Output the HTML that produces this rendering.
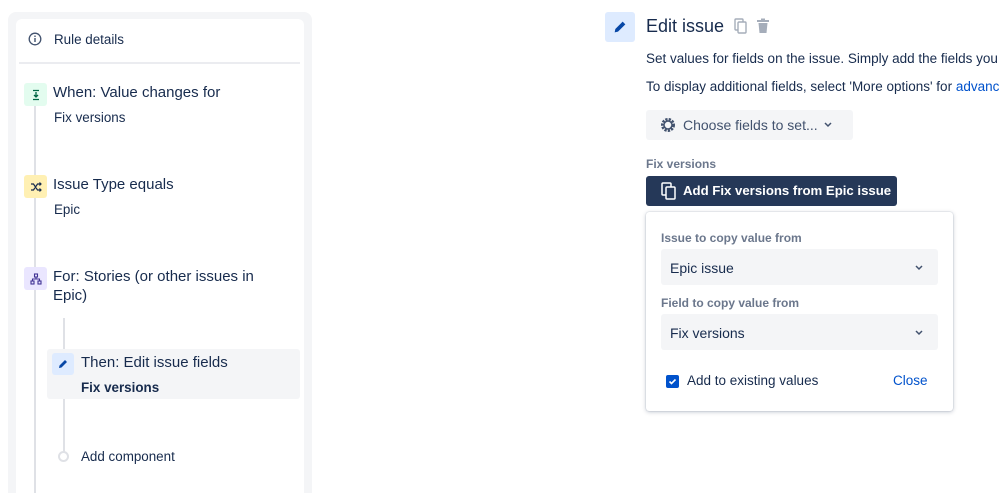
<!DOCTYPE html>
<html><head><style>
*{box-sizing:border-box;margin:0;padding:0}
html,body{width:999px;height:493px;overflow:hidden}
body{background:#fff;font-family:"Liberation Sans",sans-serif;color:#172b4d;position:relative}
.a{position:absolute;white-space:nowrap}
.ic{position:absolute;width:23px;height:23px;border-radius:3px;display:flex;align-items:center;justify-content:center}
.sel{position:absolute;left:661px;width:277px;height:36px;background:#f4f5f7;border-radius:3px;font-size:14px;padding:11px 9px}
.lab{font-size:12px;color:#6b778c;font-weight:bold}
</style></head><body>
<div class="a" style="left:8px;top:12px;width:304px;height:481px;background:#f4f5f7;border-radius:8px 8px 0 0"></div>
<div class="a" style="left:16px;top:19px;width:288px;height:474px;background:#fff;border-radius:6px 6px 0 0"></div>
<svg class="a" style="left:28px;top:32px" width="14" height="14" viewBox="0 0 14 14"><circle cx="7" cy="7" r="5.8" fill="none" stroke="#42526e" stroke-width="1.3"/><rect x="6.3" y="6" width="1.4" height="4" fill="#42526e"/><circle cx="7" cy="4.2" r=".8" fill="#42526e"/></svg>
<div class="a" style="left:54px;top:32px;font-size:13.4px">Rule details</div>
<div class="a" style="left:19px;top:62px;width:281px;height:2px;background:#ebecf0"></div>
<div class="a" style="left:34px;top:100px;width:2px;height:393px;background:#dfe1e6"></div>
<div class="ic" style="left:24px;top:83px;background:#e3fcef"><svg width="12" height="12" viewBox="0 0 12 12"><path d="M3 1.5h6M6 3v5M4 6l2 2 2-2M3 10.5h6" stroke="#006644" stroke-width="1.3" fill="none"/></svg></div>
<div class="a" style="left:53px;top:84px;font-size:15px">When: Value changes for</div>
<div class="a" style="left:54px;top:110px;font-size:13.4px">Fix versions</div>
<div class="ic" style="left:24px;top:175px;background:#fff0b3"><svg width="12" height="12" viewBox="0 0 12 12"><path d="M1 3h2.5l4 6H11M1 9h2.5l4-6H11M9.5 1.5 11 3 9.5 4.5M9.5 7.5 11 9 9.5 10.5" stroke="#172b4d" stroke-width="1.2" fill="none"/></svg></div>
<div class="a" style="left:53px;top:176px;font-size:15px">Issue Type equals</div>
<div class="a" style="left:54px;top:202px;font-size:13.4px">Epic</div>
<div class="ic" style="left:24px;top:267px;background:#eae6ff"><svg width="12" height="12" viewBox="0 0 12 12"><rect x="4.5" y="1" width="3" height="3" fill="none" stroke="#403294" stroke-width="1.1"/><rect x="1" y="8" width="3" height="3" fill="none" stroke="#403294" stroke-width="1.1"/><rect x="8" y="8" width="3" height="3" fill="none" stroke="#403294" stroke-width="1.1"/><path d="M6 4v2M2.5 8V6h7v2" stroke="#403294" stroke-width="1.1" fill="none"/></svg></div>
<div class="a" style="left:53px;top:267px;font-size:15px;line-height:19px">For: Stories (or other issues in<br>Epic)</div>
<div class="a" style="left:63px;top:318px;width:2px;height:138px;background:#dfe1e6"></div>
<div class="a" style="left:47px;top:349px;width:253px;height:50px;background:#f4f5f7;border-radius:3px"></div>
<div class="ic" style="left:52px;top:353px;width:22px;height:22px;background:#deebff"><svg width="12" height="12" viewBox="0 0 12 12"><path d="M2 10 2.5 7.5 8 2l2 2-5.5 5.5z" fill="#0747a6"/></svg></div>
<div class="a" style="left:81px;top:354px;font-size:15px">Then: Edit issue fields</div>
<div class="a" style="left:81px;top:380px;font-size:13.4px;font-weight:bold">Fix versions</div>
<div class="a" style="left:58px;top:451px;width:11px;height:11px;border:2px solid #dfe1e6;border-radius:50%;background:#fff"></div>
<div class="a" style="left:81px;top:449px;font-size:13.4px">Add component</div>

<div class="ic" style="left:605px;top:12px;width:30px;height:30px;background:#deebff"><svg width="16" height="16" viewBox="0 0 12 12"><path d="M2 10 2.5 7.5 8 2l2 2-5.5 5.5z" fill="#0747a6"/></svg></div>
<div class="a" style="left:646px;top:16px;font-size:18px">Edit issue</div>
<svg class="a" style="left:734px;top:18px" width="14" height="16" viewBox="0 0 14 16"><rect x="1" y="1" width="8" height="11" rx="1" fill="none" stroke="#a5adba" stroke-width="1.4"/><rect x="4" y="4" width="8" height="11" rx="1" fill="#fff" stroke="#a5adba" stroke-width="1.4"/></svg>
<svg class="a" style="left:756px;top:18px" width="14" height="16" viewBox="0 0 14 16"><rect x="1" y="2" width="12" height="2" fill="#a5adba"/><rect x="5" y="0.5" width="4" height="2" fill="#a5adba"/><path d="M2.5 5h9l-1 10h-7z" fill="#a5adba"/></svg>
<div class="a" style="left:646px;top:51px;font-size:13.5px">Set values for fields on the issue. Simply add the fields you</div>
<div class="a" style="left:646px;top:79px;font-size:13.5px">To display additional fields, select 'More options' for <span style="color:#0052cc">advanced</span></div>
<div class="a" style="left:646px;top:110px;width:207px;height:30px;background:#f4f5f7;border-radius:3px"></div>
<svg class="a" style="left:659px;top:116px" width="18" height="18" viewBox="0 0 18 18"><circle cx="9" cy="9" r="5.5" fill="none" stroke="#42526e" stroke-width="3" stroke-dasharray="2.2 1.1"/><circle cx="9" cy="9" r="4" fill="none" stroke="#42526e" stroke-width="1.5"/></svg>
<div class="a" style="left:683px;top:117px;font-size:14px;color:#42526e">Choose fields to set...</div>
<svg class="a" style="left:824px;top:122px" width="8" height="6" viewBox="0 0 8 6"><path d="M1 1l3 3 3-3" stroke="#42526e" stroke-width="1.5" fill="none"/></svg>
<div class="a lab" style="left:646px;top:157px">Fix versions</div>
<div class="a" style="left:646px;top:176px;width:251px;height:30px;background:#253858;border-radius:3px"></div>
<svg class="a" style="left:661px;top:182px" width="16" height="18" viewBox="0 0 16 18"><rect x="1" y="1" width="9" height="12" rx="1" fill="none" stroke="#fff" stroke-width="1.5"/><rect x="5" y="5" width="9" height="12" rx="1" fill="#253858" stroke="#fff" stroke-width="1.5"/></svg>
<div class="a" style="left:683px;top:183px;font-size:13.2px;color:#fff;font-weight:bold">Add Fix versions from Epic issue</div>
<div class="a" style="left:646px;top:212px;width:307px;height:199px;background:#fff;border-radius:3px;box-shadow:0 1px 4px rgba(9,30,66,.25),0 0 1px rgba(9,30,66,.3)"></div>
<div class="a lab" style="left:661px;top:231px">Issue to copy value from</div>
<div class="sel" style="top:249px">Epic issue</div>
<svg class="a" style="left:915px;top:265px" width="8" height="6" viewBox="0 0 8 6"><path d="M1 1l3 3 3-3" stroke="#42526e" stroke-width="1.5" fill="none"/></svg>
<div class="a lab" style="left:661px;top:296px">Field to copy value from</div>
<div class="sel" style="top:314px">Fix versions</div>
<svg class="a" style="left:915px;top:330px" width="8" height="6" viewBox="0 0 8 6"><path d="M1 1l3 3 3-3" stroke="#42526e" stroke-width="1.5" fill="none"/></svg>
<div class="a" style="left:666px;top:375px;width:13px;height:13px;background:#0052cc;border-radius:2px"></div>
<svg class="a" style="left:666px;top:375px" width="13" height="13" viewBox="0 0 13 13"><path d="M3.5 6.5l2 2 4-4" stroke="#fff" stroke-width="1.6" fill="none"/></svg>
<div class="a" style="left:687px;top:373px;font-size:13.5px">Add to existing values</div>
<div class="a" style="left:893px;top:373px;font-size:13.5px;color:#0052cc">Close</div>
</body></html>
